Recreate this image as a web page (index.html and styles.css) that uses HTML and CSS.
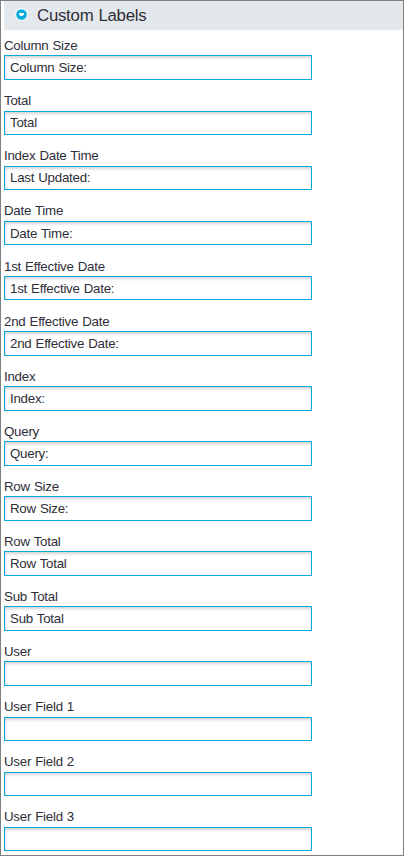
FILE: index.html
```html
<!DOCTYPE html>
<html lang="en">
<head>
    <meta charset="UTF-8">
    <meta name="viewport" content="width=device-width, initial-scale=1.0">
    <title>Custom Labels</title>
    <link rel="stylesheet" href="styles.css">
</head>
<body>
    <div class="panel">
        <!-- Section header -->
        <div class="header">
            <svg class="toggle" width="14" height="14" viewBox="0 0 14 14">
                <circle cx="7.5" cy="7.5" r="6.4" fill="#f6fafc"/>
                <circle cx="7.5" cy="7.5" r="5.3" fill="#0aaddd"/>
                <path d="M5 6h5v1.4L8.4 9H6.6L5 7.4z" fill="#fff"/>
            </svg>
            <h2>Custom Labels</h2>
        </div>

        <!-- Label fields -->
        <form class="fields">
            <div class="field">
                <label for="columnSize">Column Size</label>
                <input type="text" id="columnSize" value="Column Size:">
            </div>
            <div class="field">
                <label for="total">Total</label>
                <input type="text" id="total" value="Total">
            </div>
            <div class="field">
                <label for="indexDateTime">Index Date Time</label>
                <input type="text" id="indexDateTime" value="Last Updated:">
            </div>
            <div class="field">
                <label for="dateTime">Date Time</label>
                <input type="text" id="dateTime" value="Date Time:">
            </div>
            <div class="field">
                <label for="firstDate">1st Effective Date</label>
                <input type="text" id="firstDate" value="1st Effective Date:">
            </div>
            <div class="field">
                <label for="secondDate">2nd Effective Date</label>
                <input type="text" id="secondDate" value="2nd Effective Date:">
            </div>
            <div class="field">
                <label for="index">Index</label>
                <input type="text" id="index" value="Index:">
            </div>
            <div class="field">
                <label for="query">Query</label>
                <input type="text" id="query" value="Query:">
            </div>
            <div class="field">
                <label for="rowSize">Row Size</label>
                <input type="text" id="rowSize" value="Row Size:">
            </div>
            <div class="field">
                <label for="rowTotal">Row Total</label>
                <input type="text" id="rowTotal" value="Row Total">
            </div>
            <div class="field">
                <label for="subTotal">Sub Total</label>
                <input type="text" id="subTotal" value="Sub Total">
            </div>
            <div class="field">
                <label for="user">User</label>
                <input type="text" id="user">
            </div>
            <div class="field">
                <label for="userField1">User Field 1</label>
                <input type="text" id="userField1">
            </div>
            <div class="field">
                <label for="userField2">User Field 2</label>
                <input type="text" id="userField2">
            </div>
            <div class="field">
                <label for="userField3">User Field 3</label>
                <input type="text" id="userField3">
            </div>
        </form>
    </div>
</body>
</html>
```
FILE: styles.css
```css
* {
    box-sizing: border-box;
    margin: 0;
    padding: 0;
}

body {
    font-family: "Liberation Sans", Arial, sans-serif;
    font-size: 13.3px;
    letter-spacing: -0.24px;
    word-spacing: 0.6px;
    color: #2e2e38;
    background: #fff;
}

.panel {
    height: 856px;
    border: 1px solid #808080;
    padding-left: 3px;
    overflow: hidden;
}

.header {
    display: flex;
    align-items: flex-start;
    height: 29px;
    padding-left: 10px;
    background: #e3e8ec;
}

.toggle {
    margin: 6px 9px 0 0;
}

h2 {
    font-size: 16.8px;
    font-weight: normal;
    line-height: 29px;
}

.fields {
    padding-top: 8.145px;
}

.field {
    height: 55.095px;
}

label {
    display: block;
    height: 17.3px;
    line-height: 15px;
}

input {
    display: block;
    width: 308px;
    height: 24.6px;
    padding: 0 5px;
    border: 1px solid #06aadc;
    background: #fff;
    box-shadow: inset 0 3px 3px -1px #d4d4d4, inset 2px 0 2px -1px #e8e8e8;
    font: inherit;
    letter-spacing: inherit;
    word-spacing: inherit;
    color: inherit;
    outline: none;
}
```
